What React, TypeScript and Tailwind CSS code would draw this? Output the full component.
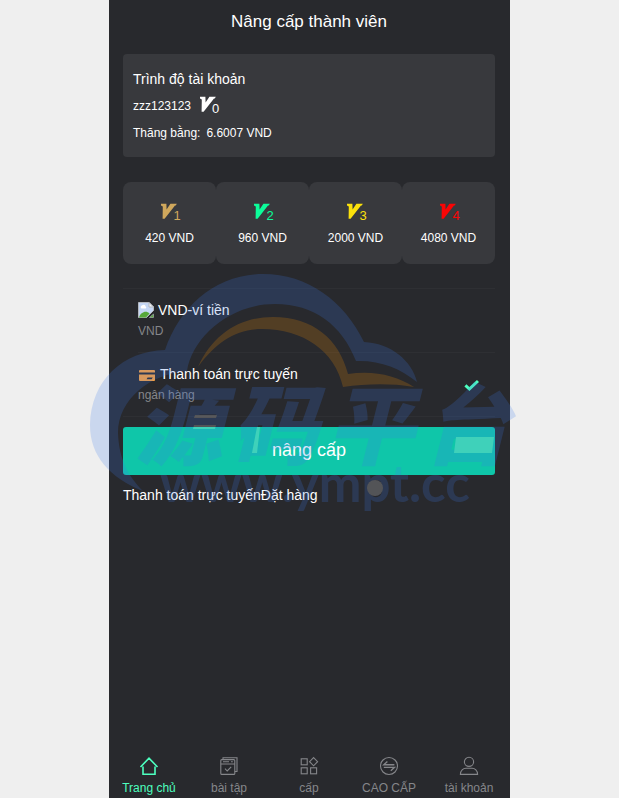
import clsx from "clsx";
import type { ReactNode } from "react";

const levels = [
  { id: 1, price: "420 VND", color: "text-[#cfa75c]" },
  { id: 2, price: "960 VND", color: "text-[#0cfc9a]" },
  { id: 3, price: "2000 VND", color: "text-[#fbe10b]" },
  { id: 4, price: "4080 VND", color: "text-[#f90505]" },
];

function VipBadge({ level, className }: { level: number; className?: string }) {
  return (
    <span className={clsx("inline-flex items-end pl-[3px]", className)}>
      <svg className="mb-[5px] h-4 w-4" viewBox="0 0 16 16" fill="currentColor">
        <path d="M0 0.8H5.4L5.6 6.4L9.4 0.8H15.8L14.8 2.6H14L3.6 15.8H1.6L1.8 3.4L0 2.4Z" />
      </svg>
      <span className="-ml-1 text-[13px] leading-4">{level}</span>
    </span>
  );
}

function BrokenImage() {
  return (
    <svg className="h-4 w-4" viewBox="0 0 16 16">
      <path d="M0.5 0.5H11L15.5 5V8.5L8.5 15.5H0.5Z" fill="#c5d7f5" stroke="#b4b8bf" />
      <path d="M11 0.5V5H15.5Z" fill="#f4f4f4" stroke="#b4b8bf" />
      <path d="M3 6a1.5 1.5 0 0 1 1-2.4a2 2 0 0 1 3.6 0.8A1.2 1.2 0 0 1 7.5 6.6H3.5Z" fill="#fff" />
      <path d="M1 15.5C2 12 5 9.8 7.5 9.8C9 9.8 10.4 10.4 11.6 11.6L8 15.5Z" fill="#56a83a" />
      <path d="M11.5 15.5L15.5 12V15.5Z" fill="#56a83a" stroke="#b4b8bf" strokeWidth="0.6" />
    </svg>
  );
}

function BankCard() {
  return (
    <svg className="h-4 w-[18px]" viewBox="0 0 18 16" fill="#ffa23b">
      <path d="M2 4H16Q17 4 17 5V6.4H1V5Q1 4 2 4Z" />
      <path
        fillRule="evenodd"
        d="M1 8.4H17V14Q17 15 16 15H2Q1 15 1 14ZM9.6 11.4L8.6 13.2H13.6L14.8 11.4Z"
      />
    </svg>
  );
}

const methods: { id: string; name: string; note: string; icon: ReactNode }[] = [
  { id: "wallet", name: "VND-ví tiền", note: "VND", icon: <BrokenImage /> },
  { id: "bank", name: "Thanh toán trực tuyến", note: "ngân hàng", icon: <BankCard /> },
];

const tabs: { label: string; active?: boolean; icon: ReactNode }[] = [
  {
    label: "Trang chủ",
    active: true,
    icon: (
      <path
        d="M1.5 11L10 2.2L18.5 11M4 10.5V18.2H16V10.5"
        strokeWidth="1.6"
      />
    ),
  },
  {
    label: "bài tập",
    icon: (
      <>
        <path d="M4 3.5V1.8H18V15.5H15.8" />
        <rect x="1.8" y="3.6" width="14" height="14.8" rx="1" />
        <path d="M1.8 8H15.8M4 5.8H10M12 5.8H13.8M6 12.6L8.2 15L12.2 10.8" />
      </>
    ),
  },
  {
    label: "cấp",
    icon: (
      <>
        <rect x="2.2" y="2.8" width="6" height="6" />
        <rect x="2.2" y="11.8" width="6" height="6" />
        <rect x="11.6" y="11.8" width="6" height="6" />
        <path d="M14.6 1.6L18.6 5.7L14.6 9.8L10.6 5.7Z" />
      </>
    ),
  },
  {
    label: "CAO CẤP",
    icon: (
      <>
        <circle cx="10" cy="10" r="8.5" />
        <path d="M15.4 8.8H4.8L8.4 5.4M4.8 11.4H15.4L11.8 14.8" strokeWidth="1.4" />
      </>
    ),
  },
  {
    label: "tài khoản",
    icon: (
      <>
        <circle cx="10" cy="5.8" r="4.6" />
        <path d="M1.4 18.4C1.4 14.4 4.2 12.2 7 12.2H13C15.8 12.2 18.6 14.4 18.6 18.4Z" />
      </>
    ),
  },
];

function Watermark() {
  return (
    <svg
      className="pointer-events-none absolute top-[270px] left-1/2 h-[260px] w-[440px] -translate-x-1/2"
      viewBox="90 270 440 260"
      aria-hidden="true"
    >
      <g opacity="0.2" fill="#3c79eb">
        <path d="M143 491C110 478 90 456 90 425C91 380 123 351 165 350C180 306 216 274 263 274C308 274 344 301 364 342C391 343 412 361 417 382C400 368 379 360 356 361C342 325 314 304 275 304C229 304 192 338 187 371C150 374 118 399 118 433C119 459 128 476 143 491Z" />
        <path
          d="M198 367C213 334 240 317 273 317C313 317 339 339 348 374C372 370 396 375 414 387C389 383 366 384 343 387C335 351 303 329 262 329C236 329 216 342 198 367Z"
          fill="#fa9105"
        />
        <text
          x="135 231 327 423"
          y="458"
          fontSize="87"
          fontWeight="900"
          fontStyle="italic"
          fontFamily="'Noto Sans CJK SC', sans-serif"
        >
          源码平台
        </text>
        <text x="160" y="502" fontSize="51" fontWeight="700" fontFamily="Lato, sans-serif">
          www.ympt.cc
        </text>
        <g fill="#fff">
          <path d="M195 415H217L216 418H194ZM194 425H216L215 429H193Z" />
          <path d="M257 427H260L257 453H252Z" />
          <path d="M456 437H494L492 453H454Z" />
          <circle cx="375" cy="488" r="8" />
        </g>
      </g>
    </svg>
  );
}

export default function App() {
  return (
    <div className="relative min-h-screen overflow-hidden bg-[#efefef] font-['Liberation_Sans',Arial,sans-serif] text-white">
      <div className="mx-auto flex min-h-screen w-full max-w-[401px] flex-col bg-[#28292d] pr-px">
        <header className="flex h-[54px] justify-center pt-[10px]">
          <h1 className="text-[17px] leading-6">Nâng cấp thành viên</h1>
        </header>

        <main className="px-[14px]">
          <section className="rounded bg-[#38393d] px-[10px] pt-4 pb-[14px]">
            <h2 className="text-sm leading-[18px]">Trình độ tài khoản</h2>
            <div className="flex h-9 items-center gap-[6px] text-xs">
              <span>zzz123123</span>
              <VipBadge level={0} />
            </div>
            <p className="flex gap-[6px] text-xs leading-[19px]">
              <span>Thăng bằng:</span>
              <span>6.6007 VND</span>
            </p>
          </section>

          <section className="mt-[25px] grid grid-cols-4">
            {levels.map((level) => (
              <button
                key={level.id}
                type="button"
                className="flex h-[82px] flex-col items-center rounded-lg bg-[#38393d] pt-[21px]"
              >
                <VipBadge level={level.id} className={level.color} />
                <span className="mt-[6px] text-xs leading-4">{level.price}</span>
              </button>
            ))}
          </section>

          <fieldset className="mt-6 border-y border-[#2e2f33]">
            {methods.map((method, i) => (
              <label
                key={method.id}
                className={clsx(
                  "ml-[15px] flex items-center border-[#2e2f33] pr-4",
                  i === 0 ? "h-[63px]" : "h-16 border-t",
                )}
              >
                <input
                  type="radio"
                  name="method"
                  value={method.id}
                  defaultChecked={method.id === "bank"}
                  className="peer sr-only"
                />
                <span className="flex-1">
                  <span className="flex items-center gap-1 text-sm leading-5">
                    {method.icon}
                    {method.name}
                  </span>
                  <span className="block text-xs leading-[22px] text-[#85868a]">{method.note}</span>
                </span>
                <svg
                  className="hidden h-4 w-4 peer-checked:block"
                  viewBox="0 0 16 16"
                  fill="none"
                  stroke="#4dffbf"
                  strokeWidth="3"
                >
                  <path d="M2.4 8.4L6.4 12L15 4" />
                </svg>
              </label>
            ))}
          </fieldset>

          <button
            type="button"
            className="mt-[10px] h-12 w-full rounded-[3px] bg-[#0fc6a9] pb-[2px] text-lg"
          >
            nâng cấp
          </button>
          <p className="mt-[10px] text-sm leading-5">Thanh toán trực tuyếnĐặt hàng</p>
        </main>

        <nav className="mt-auto grid h-[50px] grid-cols-5">
          {tabs.map((tab) => (
            <a
              key={tab.label}
              href="#"
              className={clsx(
                "flex flex-col items-center pt-2 text-xs",
                tab.active ? "text-[#4dffbf]" : "text-[#85868a]",
              )}
            >
              <svg
                className="h-5 w-5"
                viewBox="0 0 20 20"
                fill="none"
                stroke="currentColor"
                strokeWidth="1.1"
              >
                {tab.icon}
              </svg>
              <span className="mt-1 leading-4">{tab.label}</span>
            </a>
          ))}
        </nav>
      </div>
      <Watermark />
    </div>
  );
}
